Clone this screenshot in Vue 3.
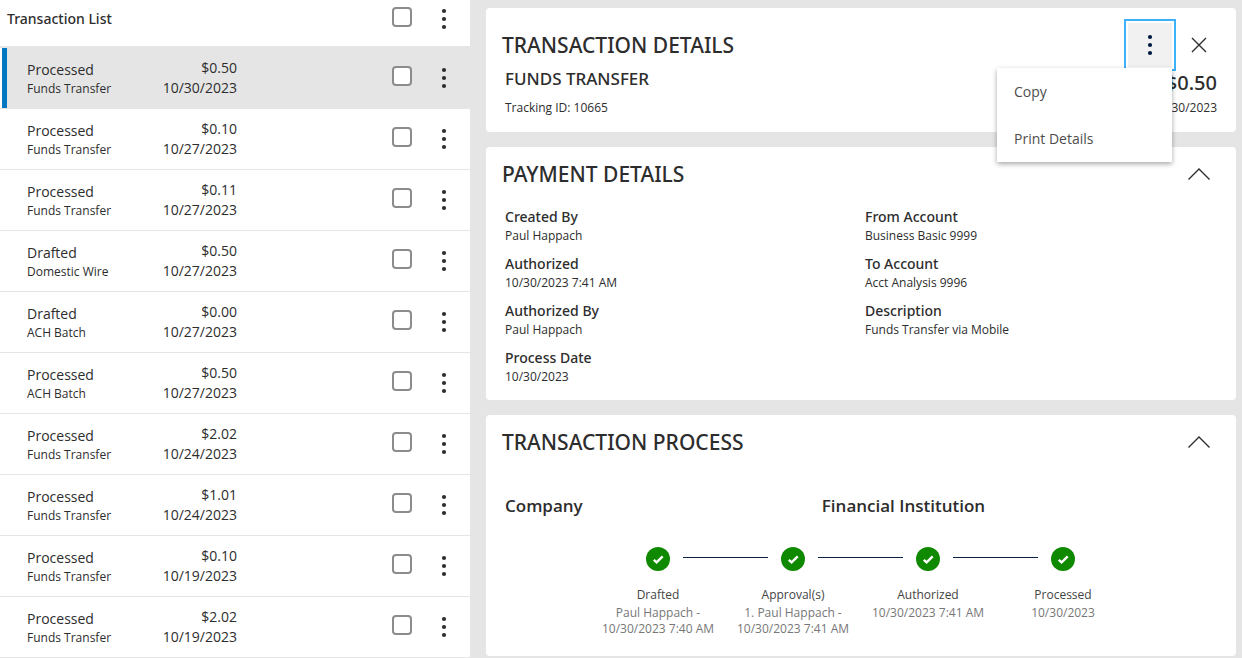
<script setup>
import { ref } from 'vue'

const transactions = ref([
  { id: 1, status: 'Processed', type: 'Funds Transfer', amount: '$0.50', date: '10/30/2023' },
  { id: 2, status: 'Processed', type: 'Funds Transfer', amount: '$0.10', date: '10/27/2023' },
  { id: 3, status: 'Processed', type: 'Funds Transfer', amount: '$0.11', date: '10/27/2023' },
  { id: 4, status: 'Drafted', type: 'Domestic Wire', amount: '$0.50', date: '10/27/2023' },
  { id: 5, status: 'Drafted', type: 'ACH Batch', amount: '$0.00', date: '10/27/2023' },
  { id: 6, status: 'Processed', type: 'ACH Batch', amount: '$0.50', date: '10/27/2023' },
  { id: 7, status: 'Processed', type: 'Funds Transfer', amount: '$2.02', date: '10/24/2023' },
  { id: 8, status: 'Processed', type: 'Funds Transfer', amount: '$1.01', date: '10/24/2023' },
  { id: 9, status: 'Processed', type: 'Funds Transfer', amount: '$0.10', date: '10/19/2023' },
  { id: 10, status: 'Processed', type: 'Funds Transfer', amount: '$2.02', date: '10/19/2023' },
])
const selectedId = ref(1)
const menuOpen = ref(true)

const fieldColumns = [
  [
    { label: 'Created By', value: 'Paul Happach' },
    { label: 'Authorized', value: '10/30/2023 7:41 AM' },
    { label: 'Authorized By', value: 'Paul Happach' },
    { label: 'Process Date', value: '10/30/2023' },
  ],
  [
    { label: 'From Account', value: 'Business Basic 9999' },
    { label: 'To Account', value: 'Acct Analysis 9996' },
    { label: 'Description', value: 'Funds Transfer via Mobile' },
  ],
]

const steps = [
  { name: 'Drafted', lines: ['Paul Happach -', '10/30/2023 7:40 AM'] },
  { name: 'Approval(s)', lines: ['1. Paul Happach -', '10/30/2023 7:41 AM'] },
  { name: 'Authorized', lines: ['10/30/2023 7:41 AM'] },
  { name: 'Processed', lines: ['10/30/2023'] },
]
</script>

<template>
  <div class="page">
    <section class="list">
      <table>
        <thead>
          <tr>
            <th class="heading" colspan="2" scope="col">Transaction List</th>
            <th class="check"><input type="checkbox" aria-label="Select all transactions" /></th>
            <th class="more">
              <button type="button" class="dots" aria-label="List actions">
                <svg width="6" height="22" viewBox="0 0 6 22"><circle cx="3" cy="3" r="2.1" /><circle cx="3" cy="11" r="2.1" /><circle cx="3" cy="19" r="2.1" /></svg>
              </button>
            </th>
          </tr>
        </thead>
        <tbody>
          <tr v-for="t in transactions" :key="t.id" :class="{ selected: t.id === selectedId }" @click="selectedId = t.id">
            <td class="kind">
              <div class="status">{{ t.status }}</div>
              <div class="type">{{ t.type }}</div>
            </td>
            <td class="amount">
              <div>{{ t.amount }}</div>
              <div>{{ t.date }}</div>
            </td>
            <td class="check"><input type="checkbox" :aria-label="`Select ${t.type} ${t.date}`" @click.stop /></td>
            <td class="more">
              <button type="button" class="dots" aria-label="Transaction actions">
                <svg width="6" height="22" viewBox="0 0 6 22"><circle cx="3" cy="3" r="2.1" /><circle cx="3" cy="11" r="2.1" /><circle cx="3" cy="19" r="2.1" /></svg>
              </button>
            </td>
          </tr>
        </tbody>
      </table>
    </section>

    <main class="detail">
      <section class="card summary-card">
        <header class="card-head tall">
          <h2>TRANSACTION DETAILS</h2>
          <div class="actions">
            <div class="menu-wrap">
              <button type="button" class="menu-button" aria-label="More actions" :aria-expanded="menuOpen" @click="menuOpen = !menuOpen">
                <svg width="6" height="22" viewBox="0 0 6 22"><circle cx="3" cy="3" r="2.1" /><circle cx="3" cy="11" r="2.1" /><circle cx="3" cy="19" r="2.1" /></svg>
              </button>
              <div v-if="menuOpen" class="menu" role="menu">
                <button type="button" role="menuitem">Copy</button>
                <button type="button" role="menuitem">Print Details</button>
              </div>
            </div>
            <button type="button" class="icon-button" aria-label="Close">
              <svg width="22" height="22" viewBox="0 0 22 22"><path d="M4 4L18 18M18 4L4 18" /></svg>
            </button>
          </div>
        </header>
        <div class="summary">
          <div>
            <h3>FUNDS TRANSFER</h3>
            <p>Tracking ID: 10665</p>
          </div>
          <div class="total">
            <strong>$0.50</strong>
            <p>10/30/2023</p>
          </div>
        </div>
      </section>

      <section class="card payment-card">
        <header class="card-head">
          <h2>PAYMENT DETAILS</h2>
          <button type="button" class="icon-button" aria-label="Collapse payment details">
            <svg width="22" height="22" viewBox="0 0 22 22"><path d="M0.5 16.5L11 6L21.5 16.5" /></svg>
          </button>
        </header>
        <div class="fields">
          <dl v-for="(column, i) in fieldColumns" :key="i">
            <div v-for="f in column" :key="f.label">
              <dt>{{ f.label }}</dt>
              <dd>{{ f.value }}</dd>
            </div>
          </dl>
        </div>
      </section>

      <section class="card process-card">
        <header class="card-head">
          <h2>TRANSACTION PROCESS</h2>
          <button type="button" class="icon-button" aria-label="Collapse transaction process">
            <svg width="22" height="22" viewBox="0 0 22 22"><path d="M0.5 16.5L11 6L21.5 16.5" /></svg>
          </button>
        </header>
        <div class="parties">
          <h3>Company</h3>
          <h3>Financial Institution</h3>
        </div>
        <ol class="steps">
          <li v-for="s in steps" :key="s.name">
            <div class="track">
              <span class="line"></span>
              <svg width="24" height="24" viewBox="0 0 24 24"><circle cx="12" cy="12" r="12" /><path d="M7.8 12.8L10.6 15.4L16.7 9.3" /></svg>
              <span class="line"></span>
            </div>
            <div class="step-name">{{ s.name }}</div>
            <div v-for="line in s.lines" :key="line" class="step-info">{{ line }}</div>
          </li>
        </ol>
      </section>
    </main>
  </div>
</template>

<style>
body {
  margin: 0;
  background: #e5e5e5;
}
</style>

<style scoped>
.page {
  display: grid;
  grid-template-columns: 470px minmax(0, 1fr);
  min-height: 100vh;
  background: #e5e5e5;
  color: #2d2d2d;
  font-family: "Open Sans", "Noto Sans", sans-serif;
  font-size: 14px;
  line-height: 20px;
}

h2, h3, p, dl, dd, ol {
  margin: 0;
  padding: 0;
}

button {
  padding: 0;
  border: 0;
  background: none;
  color: inherit;
  font: inherit;
  cursor: pointer;
}

svg {
  display: block;
}

.heading, h2, .summary h3, .total strong, dt {
  font-family: "Noto Sans", "Open Sans", sans-serif;
  font-weight: 500;
}

.list {
  background: #fff;
}

table {
  width: 100%;
  border-spacing: 0;
}

th, td {
  box-sizing: border-box;
  padding: 0;
  border-bottom: 1px solid #e5e5e5;
}

th {
  height: 48px;
  padding-bottom: 8px;
  border-bottom-width: 2px;
}

.heading {
  padding-left: 7px;
  text-align: left;
}

td {
  height: 61px;
  padding-bottom: 10px;
  vertical-align: bottom;
}

.kind {
  width: 135px;
  padding-left: 27px;
}

.type {
  font-size: 12px;
  line-height: 18px;
}

.amount {
  width: 102px;
  text-align: right;
}

.check {
  text-align: right;
}

td.check {
  padding-bottom: 22px;
}

th.check {
  padding-bottom: 12px;
}

.more {
  width: 58px;
}

td.more {
  padding-bottom: 19px;
}

.check input {
  display: block;
  appearance: none;
  box-sizing: border-box;
  width: 20px;
  height: 20px;
  margin: 0 0 0 auto;
  border: 2px solid #8c8c8c;
  border-radius: 4px;
  background: #fff;
}

.check input:checked {
  background: #0077c0;
}

.dots {
  display: block;
  margin-left: 29px;
  fill: #2d2d2d;
}

.selected td {
  background: #e5e5e5;
}

.selected .kind {
  box-shadow: inset 2px 0 #fff, inset 7px 0 #0077c0;
}

.detail {
  display: flex;
  flex-direction: column;
  gap: 15px;
  padding: 8px 6px 2px 16px;
}

.card {
  padding: 13px 11px 13px 16px;
  border-radius: 4px;
  background: #fff;
}

.summary-card {
  padding-bottom: 14px;
}

.process-card {
  padding-bottom: 19px;
}

.card-head {
  display: flex;
  align-items: center;
  justify-content: space-between;
  height: 28px;
  padding-right: 15px;
}

.card-head.tall {
  height: 48px;
}

h2 {
  font-size: 21px;
  line-height: 28px;
}

.actions {
  display: flex;
  align-items: center;
  gap: 12px;
}

.icon-button svg {
  fill: none;
  stroke: #2d2d2d;
  stroke-width: 1.4;
}

.menu-wrap {
  position: relative;
}

.menu-button {
  display: grid;
  place-items: center;
  width: 52px;
  height: 52px;
  border: 2px solid #3db2fa;
  background: #f1f1f1;
  box-shadow: inset 0 0 0 2px #fff;
  fill: #001a40;
}

.menu {
  position: absolute;
  top: 49px;
  right: 4px;
  z-index: 1;
  width: 175px;
  background: #fff;
  box-shadow: 0 2px 5px rgba(0, 0, 0, 0.35);
}

.menu button {
  display: block;
  width: 100%;
  height: 47px;
  padding: 0 17px;
  color: #4d4d4d;
  text-align: left;
}

.summary {
  display: flex;
  justify-content: space-between;
  padding: 0 8px 0 3px;
}

h3 {
  font-size: 17px;
  font-weight: 600;
}

.summary p {
  margin-top: 9px;
  font-size: 12px;
}

.total {
  text-align: right;
}

.total strong {
  display: block;
  font-size: 20px;
  line-height: 28px;
}

.summary .total p {
  margin-top: 1px;
}

.fields {
  display: grid;
  grid-template-columns: 1fr 1fr;
  margin-top: 20px;
  padding-left: 3px;
}

dl {
  display: flex;
  flex-direction: column;
  gap: 9px;
}

dt {
  line-height: 18px;
}

dd {
  font-size: 12px;
  line-height: 20px;
}

.parties {
  display: grid;
  grid-template-columns: 44fr 56fr;
  margin-top: 39px;
  padding-left: 3px;
}

.parties h3 {
  line-height: 22px;
}

.steps {
  display: grid;
  grid-template-columns: repeat(4, 135px);
  justify-content: center;
  margin-top: 30px;
  padding-right: 6px;
  list-style: none;
  font-size: 12px;
  text-align: center;
}

.track {
  display: flex;
  align-items: center;
  gap: 13px;
  margin-bottom: 15px;
}

.track circle {
  fill: #0f8a00;
}

.track path {
  fill: none;
  stroke: #fff;
  stroke-width: 2.4;
}

.line {
  flex: 1;
  height: 1px;
  margin-bottom: 3px;
  background: #0b2347;
}

li:first-child .line:first-child,
li:last-child .line:last-child {
  visibility: hidden;
}

.step-name {
  margin-bottom: 1px;
  color: #444;
  line-height: 18px;
}

.step-info {
  color: #777;
  line-height: 16px;
}
</style>
